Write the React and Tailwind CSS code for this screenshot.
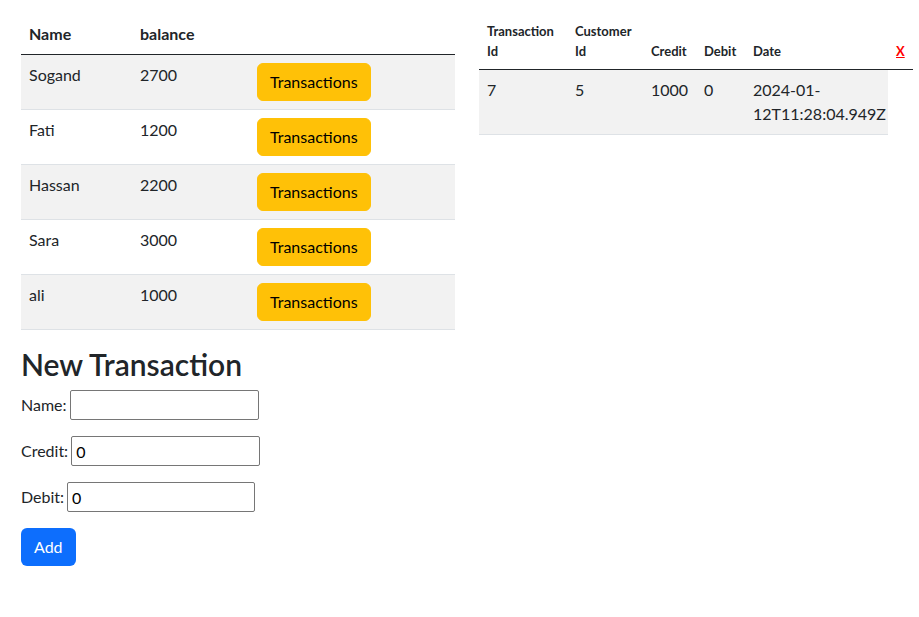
import React from 'react';

const customers = [
    { name: 'Sogand', balance: 2700 },
    { name: 'Fati', balance: 1200 },
    { name: 'Hassan', balance: 2200 },
    { name: 'Sara', balance: 3000 },
    { name: 'ali', balance: 1000 },
];

const transactions = [
    { id: 7, customerId: 5, credit: 1000, debit: 0, date: ['2024-01-', '12T11:28:04.949Z'] },
];

const font = { fontFamily: 'Lato, "Segoe UI", sans-serif' };

const CustomersTable = () => (
    <table className="w-[434px] table-fixed border-collapse text-left text-base leading-6 text-[#212529]">
        <colgroup>
            <col className="w-[111px]" />
            <col className="w-[117px]" />
            <col />
        </colgroup>
        <thead>
            <tr className="border-b border-[#212529]">
                <th className="p-2 align-bottom font-bold">Name</th>
                <th className="p-2 align-bottom font-bold">balance</th>
                <th className="p-2"></th>
            </tr>
        </thead>
        <tbody>
            {customers.map((c, i) => (
                <tr
                    key={c.name}
                    className={i % 2 === 0 ? 'border-b border-[#dee2e6] bg-[#f2f2f2]' : 'border-b border-[#dee2e6]'}
                >
                    <td className="p-2 align-top">{c.name}</td>
                    <td className="p-2 align-top">{c.balance}</td>
                    <td className="p-2 align-top">
                        <button
                            type="button"
                            className="h-[38px] rounded-md border border-[#ffc107] bg-[#ffc107] px-3 text-base leading-6 text-black"
                        >
                            Transactions
                        </button>
                    </td>
                </tr>
            ))}
        </tbody>
    </table>
);

const cell = 'border-b border-[#dee2e6] bg-[#f2f2f2] p-2 align-top';

const TransactionsTable = () => (
    <table className="w-[434px] table-fixed border-collapse text-left text-[#212529]">
        <colgroup>
            <col className="w-[88px]" />
            <col className="w-[76px]" />
            <col className="w-[53px]" />
            <col className="w-[49px]" />
            <col className="w-[143px]" />
            <col />
        </colgroup>
        <thead>
            <tr className="border-b border-[#212529] text-[13px] leading-[19.5px]">
                <th className="p-2 align-bottom font-bold">Transaction Id</th>
                <th className="p-2 align-bottom font-bold">Customer Id</th>
                <th className="p-2 align-bottom font-bold">Credit</th>
                <th className="p-2 align-bottom font-bold">Debit</th>
                <th className="p-2 align-bottom font-bold">Date</th>
                <th className="p-2 align-bottom font-bold">
                    <a href="#" className="text-[#ff0000] underline">X</a>
                </th>
            </tr>
        </thead>
        <tbody className="text-base leading-6">
            {transactions.map(t => (
                <tr key={t.id}>
                    <td className={cell}>{t.id}</td>
                    <td className={cell}>{t.customerId}</td>
                    <td className={cell}>{t.credit}</td>
                    <td className={cell}>{t.debit}</td>
                    <td className={`${cell} whitespace-nowrap`}>
                        {t.date[0]}
                        <br />
                        {t.date[1]}
                    </td>
                </tr>
            ))}
        </tbody>
    </table>
);

const Field = ({ label, value, width = 'w-[189px]' }) => (
    <div className="mb-4 flex items-center gap-[3px]">
        <label className="text-base leading-6">{label}</label>
        <input
            type="text"
            defaultValue={value}
            className={`h-[30px] rounded-[2px] border border-[#767676] bg-white px-[4px] text-base text-black ${width}`}
        />
    </div>
);

export default function App() {
    return (
        <div className="min-h-[617px] bg-white text-[#212529]" style={font}>
            <div className="flex items-start gap-6 pl-[21px] pt-[14px]">
                <div className="flex flex-col">
                    <CustomersTable />
                    <h2 className="mt-[16px] mb-[8px] text-[30px] font-semibold leading-[1.2]">New Transaction</h2>
                    <Field label="Name:" value="" />
                    <Field label="Credit:" value="0" />
                    <Field label="Debit:" value="0" width="w-[188px]" />
                    <div>
                        <button
                            type="button"
                            className="h-[38px] rounded-md bg-[#0d6efd] px-[13px] text-base leading-6 text-white"
                        >
                            Add
                        </button>
                    </div>
                </div>
                <TransactionsTable />
            </div>
        </div>
    );
}
